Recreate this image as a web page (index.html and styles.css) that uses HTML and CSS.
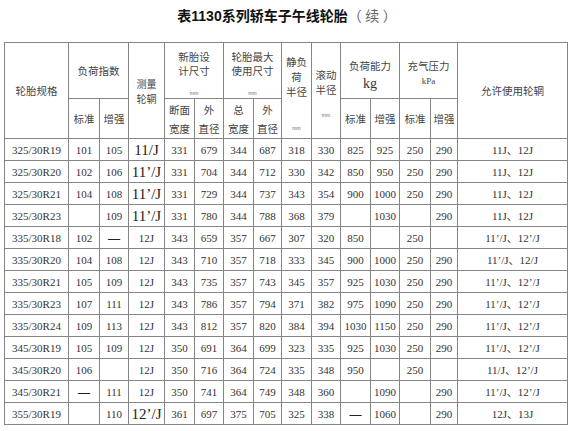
FILE: index.html
```html
<!DOCTYPE html>
<html lang="zh-CN">
<head>
<meta charset="utf-8">
<title>表1130系列轿车子午线轮胎（续）</title>
<link rel="stylesheet" href="styles.css">
</head>
<body>
<div class="page">
  <h1 class="title">表1130系列轿车子午线轮胎<span class="cont">（ 续 ）</span></h1>
  <table class="tires">
    <colgroup>
      <col class="c-spec"><col class="c31"><col class="c29"><col class="c36">
      <col class="c30"><col class="c29"><col class="c30"><col class="c28">
      <col class="c30"><col class="c29"><col class="c30"><col class="c29">
      <col class="c31"><col class="c27"><col class="c-rim">
    </colgroup>
    <thead>
      <tr class="h1">
        <th rowspan="2">轮胎规格</th>
        <th colspan="2">负荷指数</th>
        <th rowspan="2"><span class="rim-l">测量</span><span class="rim-l">轮辋</span></th>
        <th colspan="2" class="top"><span class="lh14">新胎设<br>计尺寸</span><span class="mm mm-a">mm</span></th>
        <th colspan="2" class="top"><span class="lh14">轮胎最大<br>使用尺寸</span><span class="mm mm-a">mm</span></th>
        <th rowspan="2" class="top"><span class="lh15 pad-s">静负<br>荷<br>半径</span><span class="mm mm-s">mm</span></th>
        <th rowspan="2" class="top"><span class="lh15 pad-r">滚动<br>半径</span><span class="mm mm-r">mm</span></th>
        <th colspan="2" class="top"><span class="lh14 pad-k">负荷能力</span><span class="kg">kg</span></th>
        <th colspan="2" class="top"><span class="lh14 pad-k">充气压力</span><span class="kpa">kPa</span></th>
        <th rowspan="2">允许使用轮辋</th>
      </tr>
      <tr class="h2">
        <th>标准</th><th>增强</th>
        <th><span class="lh19">断面<br>宽度</span></th>
        <th><span class="lh19">外<br>直径</span></th>
        <th><span class="lh19">总<br>宽度</span></th>
        <th><span class="lh19">外<br>直径</span></th>
        <th>标准</th><th>增强</th>
        <th>标准</th><th>增强</th>
      </tr>
    </thead>
    <tbody>
      <tr><td>325/30R19</td><td>101</td><td>105</td><td class="big">11/J</td><td>331</td><td>679</td><td>344</td><td>687</td><td>318</td><td>330</td><td>825</td><td>925</td><td>250</td><td>290</td><td>11J、12J</td></tr>
      <tr><td>325/30R20</td><td>102</td><td>106</td><td class="big">11’/J</td><td>331</td><td>704</td><td>344</td><td>712</td><td>330</td><td>342</td><td>850</td><td>950</td><td>250</td><td>290</td><td>11J、12J</td></tr>
      <tr><td>325/30R21</td><td>104</td><td>108</td><td class="big">11’/J</td><td>331</td><td>729</td><td>344</td><td>737</td><td>343</td><td>354</td><td>900</td><td>1000</td><td>250</td><td>290</td><td>11J、12J</td></tr>
      <tr><td>325/30R23</td><td></td><td>109</td><td class="big">11’/J</td><td>331</td><td>780</td><td>344</td><td>788</td><td>368</td><td>379</td><td></td><td>1030</td><td></td><td>290</td><td>11J、12J</td></tr>
      <tr><td>335/30R18</td><td>102</td><td class="dash">—</td><td>12J</td><td>343</td><td>659</td><td>357</td><td>667</td><td>307</td><td>320</td><td>850</td><td></td><td>250</td><td></td><td>11’/J、12’/J</td></tr>
      <tr><td>335/30R20</td><td>104</td><td>108</td><td>12J</td><td>343</td><td>710</td><td>357</td><td>718</td><td>333</td><td>345</td><td>900</td><td>1000</td><td>250</td><td>290</td><td>11’/J、12/J</td></tr>
      <tr><td>335/30R21</td><td>105</td><td>109</td><td>12J</td><td>343</td><td>735</td><td>357</td><td>743</td><td>345</td><td>357</td><td>925</td><td>1030</td><td>250</td><td>290</td><td>11’/J、12’/J</td></tr>
      <tr><td>335/30R23</td><td>107</td><td>111</td><td>12J</td><td>343</td><td>786</td><td>357</td><td>794</td><td>371</td><td>382</td><td>975</td><td>1090</td><td>250</td><td>290</td><td>11’/J、12’/J</td></tr>
      <tr><td>335/30R24</td><td>109</td><td>113</td><td>12J</td><td>343</td><td>812</td><td>357</td><td>820</td><td>384</td><td>394</td><td>1030</td><td>1150</td><td>250</td><td>290</td><td>11’/J、12’/J</td></tr>
      <tr><td>345/30R19</td><td>105</td><td>109</td><td>12J</td><td>350</td><td>691</td><td>364</td><td>699</td><td>323</td><td>335</td><td>925</td><td>1030</td><td>250</td><td>290</td><td>11’/J、12’/J</td></tr>
      <tr><td>345/30R20</td><td>106</td><td></td><td>12J</td><td>350</td><td>716</td><td>364</td><td>724</td><td>335</td><td>348</td><td>950</td><td></td><td>250</td><td></td><td>11/J、12’/J</td></tr>
      <tr><td>345/30R21</td><td class="dash">—</td><td>111</td><td>12J</td><td>350</td><td>741</td><td>364</td><td>749</td><td>348</td><td>360</td><td></td><td>1090</td><td></td><td>290</td><td>11’/J、12’/J</td></tr>
      <tr><td>355/30R19</td><td></td><td>110</td><td class="big">12’/J</td><td>361</td><td>697</td><td>375</td><td>705</td><td>325</td><td>338</td><td class="dash">—</td><td>1060</td><td></td><td>290</td><td>12J、13J</td></tr>
    </tbody>
  </table>
</div>
</body>
</html>
```

FILE: styles.css
```css
html, body {
  margin: 0;
  padding: 0;
  background: #ffffff;
}

.page {
  padding: 0 0 0 4px;
  width: 564px;
  font-family: "Liberation Serif", "Noto Sans CJK SC", serif;
  color: #333;
}

.title {
  margin: 0;
  height: 42px;
  padding-top: 7px;
  box-sizing: border-box;
  text-align: center;
  font-family: "Liberation Sans", "Noto Sans CJK SC", sans-serif;
  font-size: 14px;
  line-height: 18px;
  font-weight: bold;
  color: #111;
  padding-left: 2px;
}

.title .cont {
  font-weight: normal;
  color: #666;
  font-family: "Liberation Serif", "Noto Sans CJK SC", serif;
}

.tires {
  border-collapse: collapse;
  table-layout: fixed;
  width: 563px;
  font-size: 10.5px;
}

.c-spec { width: 64px; }
.c27 { width: 27px; }
.c28 { width: 28px; }
.c29 { width: 29px; }
.c30 { width: 30px; }
.c31 { width: 31px; }
.c36 { width: 36px; }
.c-rim { width: 110px; }

.tires th,
.tires td {
  border: 1px solid #858585;
  padding: 0;
  text-align: center;
  vertical-align: middle;
  white-space: nowrap;
  overflow: visible;
}

.tires th {
  font-weight: normal;
  font-family: "Noto Sans CJK SC", sans-serif;
  font-size: 10.5px;
  color: #444;
  line-height: 13px;
}

.tires th.top {
  vertical-align: top;
}

.tires tr.h1 { height: 56px; }
.tires tr.h2 { height: 40px; }
.tires tbody tr { height: 22px; }

.tires td {
  font-size: 11px;
  line-height: 14px;
  color: #333;
}

.tires td.big {
  font-size: 15px;
  color: #222;
}

.tires td.dash {
  font-weight: bold;
  font-size: 12px;
  color: #222;
}

.rim-l {
  display: block;
  height: 15px;
  line-height: 15px;
  font-size: 10px;
}

.lh14 { display: block; line-height: 14px; padding-top: 7px; }
.lh15 { display: block; line-height: 15px; }
.lh19 { display: block; line-height: 19px; }

.pad-s { padding-top: 11px; }
.pad-r { padding-top: 24px; }
.pad-k { padding-top: 16px; }

.mm {
  display: block;
  font-family: "Liberation Sans", sans-serif;
  font-size: 5px;
  line-height: 6px;
  color: #666;
}

.mm-a { margin-top: 12px; }
.mm-s { margin-top: 26px; }
.mm-r { margin-top: 15px; }

.kg {
  display: block;
  font-family: "Liberation Serif", serif;
  font-size: 14px;
  line-height: 16px;
  margin-top: 3px;
  color: #333;
}

.kpa {
  display: block;
  font-family: "Liberation Serif", serif;
  font-size: 9px;
  line-height: 12px;
  margin-top: 2px;
  color: #444;
}
```
